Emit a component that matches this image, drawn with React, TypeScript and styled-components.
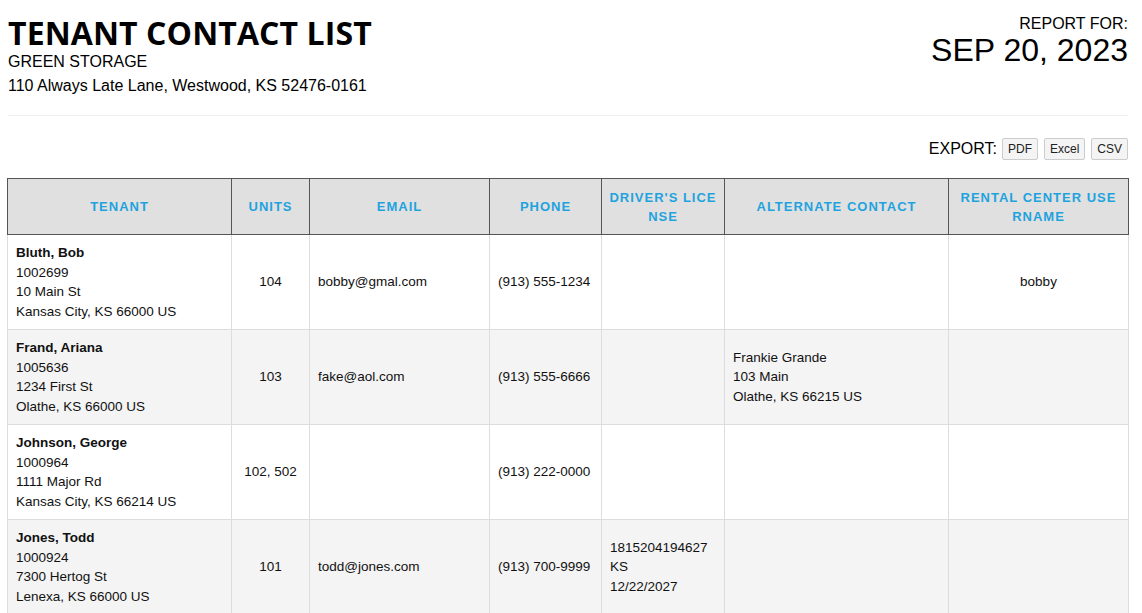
import React from 'react'
import styled, { createGlobalStyle } from 'styled-components'

const GlobalStyle = createGlobalStyle`
    body {
        margin: 0;
        background: #fff;
        color: #000;
        font-family: "Liberation Sans", Arial, sans-serif;
    }
`

const Page = styled.div`
    width: 1120px;
    padding: 0 0 0 8px;
`

const Header = styled.header`
    display: flex;
    justify-content: space-between;
    align-items: flex-start;
    padding: 16px 0 17px;
    border-bottom: 1px solid #eee;
`

const Title = styled.h1`
    margin: 0;
    font-family: "Open Sans", "Liberation Sans", sans-serif;
    font-weight: 700;
    font-size: 32px;
    line-height: 34px;
    letter-spacing: 0.1px;
`

const SubLine = styled.div`
    font-size: 16px;
    line-height: 24px;
`

const ReportFor = styled.div`
    text-align: right;
`

const ReportLabel = styled.div`
    font-size: 16px;
    line-height: 18px;
    margin-top: -1px;
`

const ReportDate = styled.div`
    font-size: 32px;
    line-height: 38px;
    margin-top: -2px;
`

const ExportBar = styled.div`
    display: flex;
    justify-content: flex-end;
    align-items: center;
    gap: 6px;
    margin: 22px 0 18px;
    font-size: 16px;
`

const ExportLabel = styled.span`
    margin-right: -1px;
`

const ExportButton = styled.button`
    font-family: "Liberation Sans", Arial, sans-serif;
    font-size: 12px;
    line-height: 14px;
    padding: 3px 5px;
    background: #f4f4f4;
    border: 1px solid #ccc;
    border-radius: 2px;
    color: #222;
`

const Table = styled.table`
    width: 1121px;
    margin-left: -1px;
    border-collapse: collapse;
    table-layout: fixed;
    font-size: 13.5px;
`

const Th = styled.th<{ $pad: number }>`
    background: #e0e0e0;
    border: 1px solid #555;
    color: #1ea3df;
    font-size: 13px;
    font-weight: bold;
    letter-spacing: 1px;
    line-height: 19px;
    height: 56px;
    padding: 0 ${p => p.$pad}px;
    box-sizing: border-box;
    word-break: break-all;
    text-align: center;
`

const Row = styled.tr<{ $alt: boolean }>`
    background: ${p => (p.$alt ? '#f4f4f4' : '#fff')};
`

const Td = styled.td<{ $center?: boolean }>`
    border: 1px solid #ddd;
    padding: 8px 8px;
    line-height: 19.5px;
    height: 95px;
    box-sizing: border-box;
    vertical-align: middle;
    text-align: ${p => (p.$center ? 'center' : 'left')};
    color: #111;
    white-space: nowrap;
`

const Name = styled.div`
    font-weight: bold;
`

type Tenant = {
    name: string
    id: string
    street: string
    city: string
    units: string
    email: string
    phone: string
    license: string[]
    alternate: string[]
    username: string
}

const tenants: Tenant[] = [
    { name: 'Bluth, Bob', id: '1002699', street: '10 Main St', city: 'Kansas City, KS 66000 US', units: '104', email: 'bobby@gmal.com', phone: '(913) 555-1234', license: [], alternate: [], username: 'bobby' },
    { name: 'Frand, Ariana', id: '1005636', street: '1234 First St', city: 'Olathe, KS 66000 US', units: '103', email: 'fake@aol.com', phone: '(913) 555-6666', license: [], alternate: ['Frankie Grande', '103 Main', 'Olathe, KS 66215 US'], username: '' },
    { name: 'Johnson, George', id: '1000964', street: '1111 Major Rd', city: 'Kansas City, KS 66214 US', units: '102, 502', email: '', phone: '(913) 222-0000', license: [], alternate: [], username: '' },
    { name: 'Jones, Todd', id: '1000924', street: '7300 Hertog St', city: 'Lenexa, KS 66000 US', units: '101', email: 'todd@jones.com', phone: '(913) 700-9999', license: ['1815204194627', 'KS', '12/22/2027'], alternate: [], username: '' },
]

const columns = [
    { label: 'TENANT', width: 224, pad: 10 },
    { label: 'UNITS', width: 78, pad: 10 },
    { label: 'EMAIL', width: 180, pad: 10 },
    { label: 'PHONE', width: 112, pad: 10 },
    { label: "DRIVER'S LICENSE", width: 123, pad: 6 },
    { label: 'ALTERNATE CONTACT', width: 224, pad: 10 },
    { label: 'RENTAL CENTER USERNAME', width: 180, pad: 10 },
]

const Lines = ({ lines }: { lines: string[] }) => (
    <>
        {lines.map(l => <div key={l}>{l}</div>)}
    </>
)

export default function App() {
    return (
        <Page>
            <GlobalStyle />
            <Header>
                <div>
                    <Title>TENANT CONTACT LIST</Title>
                    <SubLine>GREEN STORAGE</SubLine>
                    <SubLine>110 Always Late Lane, Westwood, KS 52476-0161</SubLine>
                </div>
                <ReportFor>
                    <ReportLabel>REPORT FOR:</ReportLabel>
                    <ReportDate>SEP 20, 2023</ReportDate>
                </ReportFor>
            </Header>
            <ExportBar>
                <ExportLabel>EXPORT:</ExportLabel>
                <ExportButton>PDF</ExportButton>
                <ExportButton>Excel</ExportButton>
                <ExportButton>CSV</ExportButton>
            </ExportBar>
            <Table>
                <colgroup>
                    {columns.map(c => <col key={c.label} style={{ width: c.width }} />)}
                </colgroup>
                <thead>
                    <tr>
                        {columns.map(c => <Th key={c.label} $pad={c.pad}>{c.label}</Th>)}
                    </tr>
                </thead>
                <tbody>
                    {tenants.map((t, i) => (
                        <Row key={t.id} $alt={i % 2 === 1}>
                            <Td>
                                <Name>{t.name}</Name>
                                <div>{t.id}</div>
                                <div>{t.street}</div>
                                <div>{t.city}</div>
                            </Td>
                            <Td $center>{t.units}</Td>
                            <Td>{t.email}</Td>
                            <Td>{t.phone}</Td>
                            <Td><Lines lines={t.license} /></Td>
                            <Td><Lines lines={t.alternate} /></Td>
                            <Td $center>{t.username}</Td>
                        </Row>
                    ))}
                </tbody>
            </Table>
        </Page>
    )
}
